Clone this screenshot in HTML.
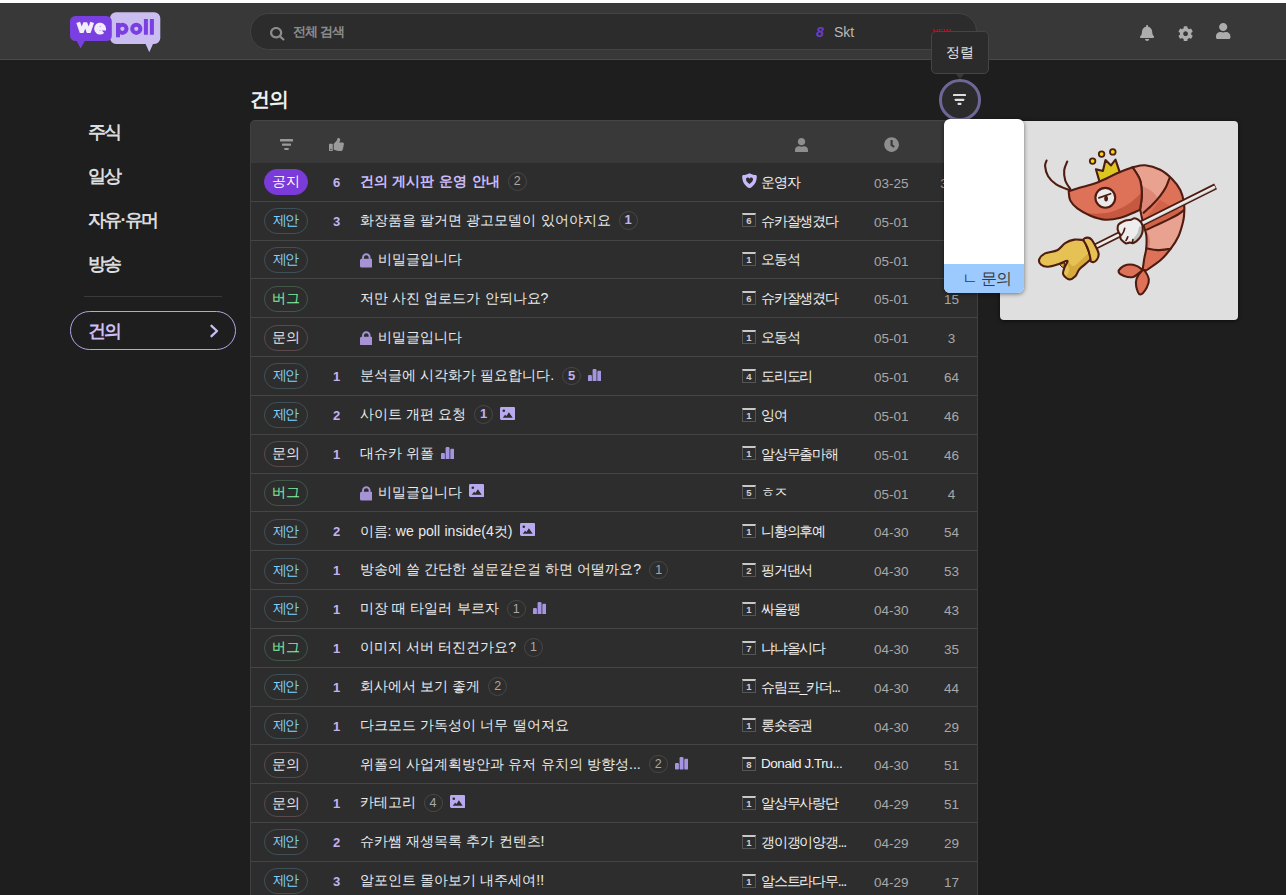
<!DOCTYPE html>
<html lang="ko">
<head>
<meta charset="utf-8">
<title>wepoll</title>
<style>
*{box-sizing:border-box;margin:0;padding:0}
html,body{width:1286px;height:895px;overflow:hidden;background:#1e1e1e;font-family:"Liberation Sans",sans-serif;color:#e0e0e0}
.abs{position:absolute}
#topstrip{position:absolute;left:0;top:0;width:1286px;height:3px;background:#fff}
#header{position:absolute;left:0;top:3px;width:1286px;height:57px;background:#383838;border-bottom:1px solid #4a4a4a}
#search{position:absolute;left:250px;top:13px;width:727px;height:37px;border-radius:19px;background:#2c2c2c;border:1px solid #434343}
#search .ph{position:absolute;left:42px;top:9.500px;font-size:12.500px;font-weight:bold;letter-spacing:-.9px;color:#8c8c8c;line-height:16px}
#search .rk{position:absolute;left:565px;top:9.300px;font-size:14px;line-height:18px;color:#6a3ec8;font-style:italic;font-weight:bold}
#search .kw{position:absolute;left:583px;top:8.800px;font-size:14px;line-height:18px;color:#b8b8b8}
#search .new{position:absolute;left:681px;top:14px;font-size:8px;line-height:8px;color:#c4001a;font-weight:bold}
/* sidebar */
.nav{position:absolute;left:88px;font-size:18px;letter-spacing:-1.700px;font-weight:bold;color:#dcdcdc;line-height:22px;white-space:nowrap}
#navdiv{position:absolute;left:84px;top:296px;width:138px;height:1px;background:#3a3a3a}
#navact{position:absolute;left:70px;top:311px;width:166px;height:39px;border:1.5px solid #b7a3e8;border-radius:20px}
#navact span{position:absolute;left:16.500px;top:8px;font-size:18px;letter-spacing:-1.700px;font-weight:bold;color:#cdbff5;line-height:22px}
/* title */
#title{position:absolute;left:250px;top:86px;font-size:20px;letter-spacing:-1.500px;font-weight:bold;color:#f0f0f0;line-height:26px}
/* table */
#tbl{position:absolute;left:250px;top:120px;width:728px;height:775px;background:#2d2d2d;border-radius:5px 5px 0 0;overflow:hidden;border-left:1px solid #404040;border-right:1px solid #404040}
#thead{position:absolute;left:-1px;top:0;width:728px;height:43px;background:#393939;border:1px solid #454545;border-bottom:none;border-radius:5px 5px 0 0}
.row{position:absolute;left:0;width:728px;height:38.83px;border-bottom:1px solid #454545}
.badge{position:absolute;left:12.800px;top:6.300px;width:44px;height:26px;border-radius:13px;border:1px solid #4a5560;font-size:13.500px;letter-spacing:-.5px;line-height:24px;text-align:center;white-space:nowrap}
.b-n{background:#7a3bd8;border-color:#7a3bd8;color:#fff}
.b-s{color:#7fd0ff;border-color:#3f5058;letter-spacing:-1.500px;text-indent:-1px}
.b-b{color:#7ff0a0;border-color:#3f5848}
.b-q{color:#f0e6e6;border-color:#5a4a4a}
.like{position:absolute;left:70.500px;width:30px;top:11px;text-align:center;font-size:13px;font-weight:bold;color:#c3b3f3;line-height:18px}
.ttl{position:absolute;left:108.500px;top:8.200px;font-size:14.100px;word-spacing:.45px;line-height:20px;color:#eaeaea;white-space:nowrap;display:flex;align-items:center}
.ttl.nt{font-weight:bold;color:#cbbbfb;letter-spacing:.1px}
.cc{display:inline-block;width:19px;height:18.500px;border-radius:9.500px;border:1.300px solid #474747;font-size:12.500px;line-height:16px;text-align:center;color:#a8a8a8;margin-left:8px;font-weight:normal;letter-spacing:0;position:relative;top:.5px}
.cc.h{color:#c0b2f6;font-weight:bold;font-size:13px}
.au{position:absolute;left:510px;top:9.800px;font-size:14px;letter-spacing:-1.200px;line-height:18px;color:#f0f0f0;white-space:nowrap}
.lv{position:absolute;left:491px;top:11.600px;width:14px;height:14px;border:1px solid #555;border-top:2px solid #c8c8c8;font-size:9.500px;line-height:11px;font-weight:bold;color:#d0d0d0;text-align:center}
.dt{position:absolute;left:610.300px;width:60px;top:12px;text-align:center;font-size:13.500px;line-height:18px;color:#a8a8a8}
.vw{position:absolute;left:680.400px;width:40px;top:12px;text-align:center;font-size:13.500px;line-height:18px;color:#a8a8a8}
.ic{display:inline-block;vertical-align:middle}
.ig{margin-left:7px;display:inline-flex;align-items:center}
/* sort button, tooltip, dropdown, card */
#sortbtn{position:absolute;left:939.200px;top:78.900px;width:41.700px;height:41.700px;border-radius:50%;border:3.200px solid #6c6796;background:#2b2b2b}
#tip{position:absolute;left:931px;top:31px;width:58px;height:43px;background:#2b2b2b;border:1px solid #454545;border-radius:5px;font-size:14px;line-height:40px;text-align:center;color:#e6e6e6}
#tiparrow{position:absolute;left:956.200px;top:73.500px;width:0;height:0;border-left:4px solid transparent;border-right:4px solid transparent;border-top:5px solid #383838}
#dd{position:absolute;left:944px;top:119px;width:80px;height:174px;background:#fff;border-radius:6px;overflow:hidden;box-shadow:0 1px 4px rgba(0,0,0,.5)}
#dd .sel{position:absolute;left:0;top:145px;width:80px;height:29px;background:#9ccaff;color:#3a3a3a;font-size:15.500px;letter-spacing:-.5px;line-height:30px;padding-left:17.500px;white-space:nowrap}
#card{position:absolute;left:1000px;top:121px;width:238px;height:199px;background:#dfdfdf;border-radius:4px;box-shadow:0 1px 4px rgba(0,0,0,.6)}
</style>
</head>
<body>
<div id="topstrip"></div>
<div id="header"></div>
<div id="search">
  <span class="ph">전체 검색</span>
  <span class="rk">8</span><span class="kw">Skt</span>
  <span class="new">NEW</span>
</div>

<div class="nav" style="top:121px">주식</div>
<div class="nav" style="top:164.500px">일상</div>
<div class="nav" style="top:209px">자유·유머</div>
<div class="nav" style="top:252.500px">방송</div>
<div id="navdiv"></div>
<div id="navact"><span>건의</span></div>

<div id="title">건의</div>

<div id="tbl">
  <div id="thead"></div>
  <!--ROWS-->
<div class="row" style="top:43.00px"><span class="badge b-n">공지</span><span class="like">6</span><span class="ttl nt"><span>건의 게시판 운영 안내</span><span class="cc">2</span></span><svg class="abs" style="left:490.500px;top:9.500px" width="15" height="15.500" viewBox="0 0 15 15.500"><path d="M7.500 0.200C9.500 1.300 11.800 1.900 13.600 2.100c.8.100 1.200.6 1.200 1.300C14.800 9 12 13 7.500 15.300 3 13 .2 9 .2 3.400c0-.7.400-1.200 1.200-1.300C3.200 1.900 5.500 1.300 7.500.2z" fill="#c6b8fb"/><path d="M7.500 11C5.300 9.300 4 8.100 4 6.600a1.800 1.800 0 0 1 3.500-.8 1.800 1.800 0 0 1 3.500.8c0 1.500-1.300 2.700-3.500 4.400z" fill="#2d2d2d"/></svg><span class="au">운영자</span><span class="dt">03-25</span><span class="vw">354</span></div>
<div class="row" style="top:81.83px"><span class="badge b-s">제안</span><span class="like">3</span><span class="ttl"><span>화장품을 팔거면 광고모델이 있어야지요</span><span class="cc h">1</span></span><span class="lv">6</span><span class="au">슈카잘생겼다</span><span class="dt">05-01</span><span class="vw">8</span></div>
<div class="row" style="top:120.66px"><span class="badge b-s">제안</span><span class="ttl"><svg class="ic lock" style="position:relative;top:1.500px" width="12.600" height="14.500" viewBox="0 0 12.600 14.500"><path d="M3 6.500V4.500a3.300 3.300 0 0 1 6.600 0V6.500" fill="none" stroke="#a593d6" stroke-width="1.900"/><rect x="0" y="5.700" width="12.600" height="8.800" rx="1.500" fill="#a593d6"/></svg><span style="margin-left:5.500px">비밀글입니다</span></span><span class="lv">1</span><span class="au">오동석</span><span class="dt">05-01</span><span class="vw">5</span></div>
<div class="row" style="top:159.49px"><span class="badge b-b">버그</span><span class="ttl"><span>저만 사진 업로드가 안되나요?</span></span><span class="lv">6</span><span class="au">슈카잘생겼다</span><span class="dt">05-01</span><span class="vw">15</span></div>
<div class="row" style="top:198.32px"><span class="badge b-q">문의</span><span class="ttl"><svg class="ic lock" style="position:relative;top:1.500px" width="12.600" height="14.500" viewBox="0 0 12.600 14.500"><path d="M3 6.500V4.500a3.300 3.300 0 0 1 6.600 0V6.500" fill="none" stroke="#a593d6" stroke-width="1.900"/><rect x="0" y="5.700" width="12.600" height="8.800" rx="1.500" fill="#a593d6"/></svg><span style="margin-left:5.500px">비밀글입니다</span></span><span class="lv">1</span><span class="au">오동석</span><span class="dt">05-01</span><span class="vw">3</span></div>
<div class="row" style="top:237.15px"><span class="badge b-s">제안</span><span class="like">1</span><span class="ttl"><span>분석글에 시각화가 필요합니다.</span><span class="cc h">5</span><span class="ig"><svg class="ic chart" style="position:relative;top:-.2px" width="13.300" height="12.600" viewBox="0 0 13.300 12.600"><rect x="0" y="6.100" width="3.900" height="6.500" rx="1" fill="#a595e0"/><rect x="4.600" y="0" width="3.900" height="12.600" rx="1.200" fill="#a595e0"/><rect x="9.300" y="1.700" width="4" height="10.900" rx="1.200" fill="#a595e0"/></svg></span></span><span class="lv">4</span><span class="au">도리도리</span><span class="dt">05-01</span><span class="vw">64</span></div>
<div class="row" style="top:275.98px"><span class="badge b-s">제안</span><span class="like">2</span><span class="ttl"><span>사이트 개편 요청</span><span class="cc h">1</span><span class="ig"><svg class="ic img" style="position:relative;top:-1px" width="15.200" height="13" viewBox="0 0 15.200 13"><rect x="0" y="0" width="15.200" height="13" rx="1.400" fill="#b9aaf0"/><circle cx="3.800" cy="3.700" r="1.300" fill="#2d2d2d"/><path d="M2.700 10.800l2.400-3 1.300 1.300 2.500-3.800 3.800 5.500z" fill="#2d2d2d"/></svg></span></span><span class="lv">1</span><span class="au">잉여</span><span class="dt">05-01</span><span class="vw">46</span></div>
<div class="row" style="top:314.81px"><span class="badge b-q">문의</span><span class="like">1</span><span class="ttl"><span>대슈카 위폴</span><span class="ig"><svg class="ic chart" style="position:relative;top:-.2px" width="13.300" height="12.600" viewBox="0 0 13.300 12.600"><rect x="0" y="6.100" width="3.900" height="6.500" rx="1" fill="#a595e0"/><rect x="4.600" y="0" width="3.900" height="12.600" rx="1.200" fill="#a595e0"/><rect x="9.300" y="1.700" width="4" height="10.900" rx="1.200" fill="#a595e0"/></svg></span></span><span class="lv">1</span><span class="au">알상무출마해</span><span class="dt">05-01</span><span class="vw">46</span></div>
<div class="row" style="top:353.64px"><span class="badge b-b">버그</span><span class="ttl"><svg class="ic lock" style="position:relative;top:1.500px" width="12.600" height="14.500" viewBox="0 0 12.600 14.500"><path d="M3 6.500V4.500a3.300 3.300 0 0 1 6.600 0V6.500" fill="none" stroke="#a593d6" stroke-width="1.900"/><rect x="0" y="5.700" width="12.600" height="8.800" rx="1.500" fill="#a593d6"/></svg><span style="margin-left:5.500px">비밀글입니다</span><span class="ig"><svg class="ic img" style="position:relative;top:-1px" width="15.200" height="13" viewBox="0 0 15.200 13"><rect x="0" y="0" width="15.200" height="13" rx="1.400" fill="#b9aaf0"/><circle cx="3.800" cy="3.700" r="1.300" fill="#2d2d2d"/><path d="M2.700 10.800l2.400-3 1.300 1.300 2.500-3.800 3.800 5.500z" fill="#2d2d2d"/></svg></span></span><span class="lv">5</span><span class="au">ㅎㅈ</span><span class="dt">05-01</span><span class="vw">4</span></div>
<div class="row" style="top:392.47px"><span class="badge b-s">제안</span><span class="like">2</span><span class="ttl"><span>이름: we poll inside(4컷)</span><span class="ig"><svg class="ic img" style="position:relative;top:-1px" width="15.200" height="13" viewBox="0 0 15.200 13"><rect x="0" y="0" width="15.200" height="13" rx="1.400" fill="#b9aaf0"/><circle cx="3.800" cy="3.700" r="1.300" fill="#2d2d2d"/><path d="M2.700 10.800l2.400-3 1.300 1.300 2.500-3.800 3.800 5.500z" fill="#2d2d2d"/></svg></span></span><span class="lv">1</span><span class="au">니황의후예</span><span class="dt">04-30</span><span class="vw">54</span></div>
<div class="row" style="top:431.30px"><span class="badge b-s">제안</span><span class="like">1</span><span class="ttl"><span>방송에 쓸 간단한 설문같은걸 하면 어떨까요?</span><span class="cc">1</span></span><span class="lv">2</span><span class="au">핑거댄서</span><span class="dt">04-30</span><span class="vw">53</span></div>
<div class="row" style="top:470.13px"><span class="badge b-s">제안</span><span class="like">1</span><span class="ttl"><span>미장 때 타일러 부르자</span><span class="cc">1</span><span class="ig"><svg class="ic chart" style="position:relative;top:-.2px" width="13.300" height="12.600" viewBox="0 0 13.300 12.600"><rect x="0" y="6.100" width="3.900" height="6.500" rx="1" fill="#a595e0"/><rect x="4.600" y="0" width="3.900" height="12.600" rx="1.200" fill="#a595e0"/><rect x="9.300" y="1.700" width="4" height="10.900" rx="1.200" fill="#a595e0"/></svg></span></span><span class="lv">1</span><span class="au">싸울팽</span><span class="dt">04-30</span><span class="vw">43</span></div>
<div class="row" style="top:508.96px"><span class="badge b-b">버그</span><span class="like">1</span><span class="ttl"><span>이미지 서버 터진건가요?</span><span class="cc">1</span></span><span class="lv">7</span><span class="au">냐냐올시다</span><span class="dt">04-30</span><span class="vw">35</span></div>
<div class="row" style="top:547.79px"><span class="badge b-s">제안</span><span class="like">1</span><span class="ttl"><span>회사에서 보기 좋게</span><span class="cc">2</span></span><span class="lv">1</span><span class="au">슈림프_카더...</span><span class="dt">04-30</span><span class="vw">44</span></div>
<div class="row" style="top:586.62px"><span class="badge b-s">제안</span><span class="like">1</span><span class="ttl"><span>다크모드 가독성이 너무 떨어져요</span></span><span class="lv">1</span><span class="au">롱숏증권</span><span class="dt">04-30</span><span class="vw">29</span></div>
<div class="row" style="top:625.45px"><span class="badge b-q">문의</span><span class="ttl"><span>위폴의 사업계획방안과 유저 유치의 방향성...</span><span class="cc">2</span><span class="ig"><svg class="ic chart" style="position:relative;top:-.2px" width="13.300" height="12.600" viewBox="0 0 13.300 12.600"><rect x="0" y="6.100" width="3.900" height="6.500" rx="1" fill="#a595e0"/><rect x="4.600" y="0" width="3.900" height="12.600" rx="1.200" fill="#a595e0"/><rect x="9.300" y="1.700" width="4" height="10.900" rx="1.200" fill="#a595e0"/></svg></span></span><span class="lv">8</span><span class="au" style="letter-spacing:-.45px;font-size:13.500px">Donald J.Tru...</span><span class="dt">04-30</span><span class="vw">51</span></div>
<div class="row" style="top:664.28px"><span class="badge b-q">문의</span><span class="like">1</span><span class="ttl"><span>카테고리</span><span class="cc">4</span><span class="ig"><svg class="ic img" style="position:relative;top:-1px" width="15.200" height="13" viewBox="0 0 15.200 13"><rect x="0" y="0" width="15.200" height="13" rx="1.400" fill="#b9aaf0"/><circle cx="3.800" cy="3.700" r="1.300" fill="#2d2d2d"/><path d="M2.700 10.800l2.400-3 1.300 1.300 2.500-3.800 3.800 5.500z" fill="#2d2d2d"/></svg></span></span><span class="lv">1</span><span class="au">알상무사랑단</span><span class="dt">04-29</span><span class="vw">51</span></div>
<div class="row" style="top:703.11px"><span class="badge b-s">제안</span><span class="like">2</span><span class="ttl"><span>슈카쌤 재생목록 추가 컨텐츠!</span></span><span class="lv">1</span><span class="au">갱이갱이양갱...</span><span class="dt">04-29</span><span class="vw">29</span></div>
<div class="row" style="top:741.94px"><span class="badge b-s">제안</span><span class="like">3</span><span class="ttl"><span>알포인트 몰아보기 내주세여!!</span></span><span class="lv">1</span><span class="au">알스트라다무...</span><span class="dt">04-29</span><span class="vw">17</span></div>
<!--/ROWS-->
</div>

<div id="card"></div>
<!--SHRIMP-->
<svg class="abs" style="left:1000px;top:121px" width="238" height="199" viewBox="1000 121 238 199">
<defs><clipPath id="cb"><path d="M1132.6 167.2C1134.7 166.9 1140.6 164.9 1145.2 165.3C1149.8 165.7 1155.7 167.5 1160.2 169.8C1164.7 172.1 1168.9 175.8 1172.3 179.2C1175.7 182.6 1178.5 186.3 1180.4 190.2C1182.3 194.0 1183.3 198.5 1183.9 202.3C1184.5 206.1 1184.4 209.7 1184.2 213.0C1184.0 216.3 1184.0 218.2 1183.0 222.1C1182.0 226.0 1180.6 231.7 1178.5 236.2C1176.4 240.7 1173.4 245.2 1170.4 249.2C1167.4 253.2 1164.4 256.8 1160.4 260.3C1156.4 263.8 1148.7 268.7 1146.3 270.4L1142.6 270.0C1142.9 268.1 1143.7 261.9 1144.3 258.3C1144.9 254.7 1146.0 252.0 1146.3 248.2C1146.6 244.3 1146.8 239.2 1146.3 235.2C1145.8 231.2 1144.3 228.4 1143.3 224.1C1142.3 219.8 1140.6 211.8 1140.1 209.4C1140.4 207.1 1141.8 200.2 1141.8 195.3C1141.8 190.4 1141.6 184.9 1140.1 180.2C1138.6 175.5 1133.8 169.4 1132.6 167.2Z"/></clipPath><clipPath id="ch"><path d="M1068.7 191.3C1070.6 190.7 1075.8 188.9 1080.3 187.6C1084.8 186.3 1091.0 184.9 1095.4 183.3C1099.9 181.7 1103.0 180.0 1107.0 178.2C1111.0 176.3 1115.2 174.0 1119.5 172.2C1123.8 170.4 1130.4 168.0 1132.6 167.2C1133.8 169.4 1138.6 175.5 1140.1 180.2C1141.6 184.9 1141.8 190.4 1141.8 195.3C1141.8 200.2 1140.4 207.1 1140.1 209.4C1139.3 209.8 1138.9 210.4 1135.6 211.8C1132.3 213.2 1125.5 216.4 1120.5 217.7C1115.5 219.0 1110.5 220.0 1105.5 219.7C1100.5 219.4 1095.1 217.6 1090.4 215.7C1085.7 213.8 1080.7 210.9 1077.3 208.4C1073.9 205.9 1071.6 203.2 1070.2 200.4C1068.8 197.6 1069.0 192.8 1068.7 191.3Z"/></clipPath><clipPath id="cw"><path d="M1117.6 228.8C1117.5 227.5 1117.7 225.8 1118.4 224.7C1119.1 223.6 1120.7 222.8 1122.0 222.1C1123.3 221.4 1124.9 220.7 1126.4 220.3C1127.9 219.9 1130.0 220.0 1131.2 219.7C1132.4 219.4 1132.7 218.6 1133.6 218.4C1134.5 218.2 1135.6 218.3 1136.5 218.7C1137.4 219.0 1138.4 219.8 1139.2 220.5C1140.0 221.2 1141.0 222.0 1141.6 223.2C1142.2 224.4 1142.7 226.2 1142.8 227.9C1142.9 229.6 1142.6 231.6 1142.1 233.2C1141.6 234.8 1140.9 236.3 1139.9 237.7C1138.9 239.0 1137.5 240.4 1136.3 241.3C1135.1 242.2 1133.8 242.9 1132.7 243.1C1131.6 243.3 1130.5 242.5 1129.4 242.6C1128.3 242.7 1127.1 243.6 1126.0 243.4C1124.9 243.2 1123.8 242.1 1122.9 241.3C1122.0 240.5 1121.0 239.7 1120.6 238.6C1120.1 237.5 1120.5 236.1 1120.2 235.0C1119.9 233.9 1119.1 233.3 1118.7 232.3C1118.3 231.3 1117.6 230.1 1117.6 228.8Z"/></clipPath><clipPath id="cy"><path d="M1083.3 240.1C1081.8 240.0 1077.3 239.1 1074.3 239.6C1071.3 240.1 1068.0 241.3 1065.2 243.1C1062.4 244.9 1060.6 248.5 1057.2 250.2C1053.8 251.9 1048.1 251.9 1045.1 253.4C1042.1 254.9 1040.0 257.3 1039.3 259.2C1038.6 261.1 1039.6 263.5 1041.1 264.8C1042.6 266.1 1045.1 266.9 1048.1 266.8C1051.1 266.7 1055.8 265.0 1059.0 264.0C1062.2 263.0 1066.5 260.3 1067.4 260.9C1068.3 261.4 1065.3 265.1 1064.6 267.3C1063.9 269.5 1062.4 272.3 1063.2 274.3C1064.0 276.3 1067.2 279.1 1069.2 279.4C1071.2 279.7 1073.6 278.0 1075.3 276.3C1077.0 274.6 1077.5 271.5 1079.3 269.3C1081.1 267.1 1084.4 264.9 1086.3 263.3C1088.2 261.7 1089.8 260.1 1090.5 259.5Z"/></clipPath></defs>
<path d="M1132.6 167.2C1134.7 166.9 1140.6 164.9 1145.2 165.3C1149.8 165.7 1155.7 167.5 1160.2 169.8C1164.7 172.1 1168.9 175.8 1172.3 179.2C1175.7 182.6 1178.5 186.3 1180.4 190.2C1182.3 194.0 1183.3 198.5 1183.9 202.3C1184.5 206.1 1184.4 209.7 1184.2 213.0C1184.0 216.3 1184.0 218.2 1183.0 222.1C1182.0 226.0 1180.6 231.7 1178.5 236.2C1176.4 240.7 1173.4 245.2 1170.4 249.2C1167.4 253.2 1164.4 256.8 1160.4 260.3C1156.4 263.8 1148.7 268.7 1146.3 270.4L1142.6 270.0C1142.9 268.1 1143.7 261.9 1144.3 258.3C1144.9 254.7 1146.0 252.0 1146.3 248.2C1146.6 244.3 1146.8 239.2 1146.3 235.2C1145.8 231.2 1144.3 228.4 1143.3 224.1C1142.3 219.8 1140.6 211.8 1140.1 209.4C1140.4 207.1 1141.8 200.2 1141.8 195.3C1141.8 190.4 1141.6 184.9 1140.1 180.2C1138.6 175.5 1133.8 169.4 1132.6 167.2Z" fill="#e9a190"/>
<g clip-path="url(#cb)"><path d="M1141 186C1150 188 1158 196 1158 200L1143 215L1139 210Z" fill="#dd8876"/><path d="M1169.6 177.9C1169.0 179.4 1167.6 184.0 1166.0 187.0C1164.4 190.0 1162.5 192.8 1160.2 195.8C1157.9 198.8 1154.8 202.2 1152.0 205.0C1149.2 207.8 1145.0 211.5 1143.6 212.8L1140 224L1147.0 229.6C1149.0 228.7 1155.1 225.8 1159.0 224.0C1162.9 222.2 1167.1 220.2 1170.3 218.6C1173.5 217.0 1175.7 215.9 1178.0 214.5C1180.3 213.1 1183.0 210.9 1184.0 210.2L1190 200L1180 175Z" fill="#dd7259"/><path d="M1160 200C1166 203 1175 210 1183 211L1170 219L1147 230L1143 222Z" fill="#c75840" opacity=".55"/><path d="M1147 232C1152 240 1150 248 1147.500 249L1145 249L1145 230Z" fill="#dd8876"/><path d="M1146.3 248.2C1148.2 248.5 1153.4 250.0 1157.5 250.1C1161.6 250.2 1168.6 248.9 1170.8 248.7L1175 260L1146 275L1138 270Z" fill="#dd7259"/></g>
<g fill="none" stroke="#4e1c10" stroke-width="2.1" stroke-linecap="round" stroke-linejoin="round"><path d="M1132.6 167.2C1134.7 166.9 1140.6 164.9 1145.2 165.3C1149.8 165.7 1155.7 167.5 1160.2 169.8C1164.7 172.1 1168.9 175.8 1172.3 179.2C1175.7 182.6 1178.5 186.3 1180.4 190.2C1182.3 194.0 1183.3 198.5 1183.9 202.3C1184.5 206.1 1184.4 209.7 1184.2 213.0C1184.0 216.3 1184.0 218.2 1183.0 222.1C1182.0 226.0 1180.6 231.7 1178.5 236.2C1176.4 240.7 1173.4 245.2 1170.4 249.2C1167.4 253.2 1164.4 256.8 1160.4 260.3C1156.4 263.8 1148.7 268.7 1146.3 270.4L1142.6 270.0C1142.9 268.1 1143.7 261.9 1144.3 258.3C1144.9 254.7 1146.0 252.0 1146.3 248.2C1146.6 244.3 1146.8 239.2 1146.3 235.2C1145.8 231.2 1144.3 228.4 1143.3 224.1C1142.3 219.8 1140.6 211.8 1140.1 209.4C1140.4 207.1 1141.8 200.2 1141.8 195.3C1141.8 190.4 1141.6 184.9 1140.1 180.2C1138.6 175.5 1133.8 169.4 1132.6 167.2Z"/><path d="M1169.6 177.9C1169.0 179.4 1167.6 184.0 1166.0 187.0C1164.4 190.0 1162.5 192.8 1160.2 195.8C1157.9 198.8 1154.8 202.2 1152.0 205.0C1149.2 207.8 1145.0 211.5 1143.6 212.8"/><path d="M1184.0 210.2C1183.0 210.9 1180.3 213.1 1178.0 214.5C1175.7 215.9 1173.5 217.0 1170.3 218.6C1167.1 220.2 1162.9 222.2 1159.0 224.0C1155.1 225.8 1149.0 228.7 1147.0 229.6"/><path d="M1146.3 248.2C1148.2 248.5 1153.4 250.0 1157.5 250.1C1161.6 250.2 1168.6 248.9 1170.8 248.7"/></g>
<g fill="#dd7259" stroke="#4e1c10" stroke-width="2.1" stroke-linejoin="round"><path d="M1142.3 269.6C1141.0 268.5 1136.2 265.4 1133.2 264.8C1130.2 264.2 1126.5 264.7 1124.1 265.8C1121.7 266.9 1118.6 269.7 1118.6 271.4C1118.6 273.1 1121.7 275.0 1124.1 275.9C1126.5 276.8 1130.4 277.6 1133.2 276.9C1136.0 276.2 1139.3 272.8 1140.8 271.6C1142.3 270.4 1143.6 270.7 1142.3 269.6Z"/><path d="M1142.3 270.4C1141.0 271.6 1137.7 275.7 1136.7 278.4C1135.7 281.1 1135.6 283.8 1136.2 286.5C1136.8 289.2 1138.4 294.3 1140.2 294.5C1142.0 294.7 1145.4 290.0 1146.8 287.5C1148.2 285.0 1149.1 282.1 1148.8 279.4C1148.5 276.6 1145.9 272.5 1144.8 271.0C1143.7 269.5 1143.6 269.2 1142.3 270.4Z"/></g>
<g fill="none" stroke="#4e1c10" stroke-width="2.1" stroke-linecap="round"><path d="M1046.6 160.6C1046.3 161.5 1044.8 163.6 1045.1 166.2C1045.3 168.8 1046.2 173.2 1048.1 176.2C1049.9 179.2 1052.7 182.0 1056.2 184.3C1059.7 186.6 1067.0 189.1 1069.2 190.0"/><path d="M1067.2 161.6C1066.7 163.0 1064.5 167.1 1064.2 170.2C1063.9 173.3 1064.2 177.0 1065.2 180.2C1066.2 183.4 1069.5 187.7 1070.4 189.2"/></g>
<path d="M1099.6 181.9L1095.9 169.2L1102.9 170.9L1105.5 160.1L1111.0 165.4L1115.5 159.6L1119.7 172.2Z" fill="#dcc620" stroke="#4e1c10" stroke-width="2.1" stroke-linejoin="round"/>
<path d="M1068.7 191.3C1070.6 190.7 1075.8 188.9 1080.3 187.6C1084.8 186.3 1091.0 184.9 1095.4 183.3C1099.9 181.7 1103.0 180.0 1107.0 178.2C1111.0 176.3 1115.2 174.0 1119.5 172.2C1123.8 170.4 1130.4 168.0 1132.6 167.2C1133.8 169.4 1138.6 175.5 1140.1 180.2C1141.6 184.9 1141.8 190.4 1141.8 195.3C1141.8 200.2 1140.4 207.1 1140.1 209.4C1139.3 209.8 1138.9 210.4 1135.6 211.8C1132.3 213.2 1125.5 216.4 1120.5 217.7C1115.5 219.0 1110.5 220.0 1105.5 219.7C1100.5 219.4 1095.1 217.6 1090.4 215.7C1085.7 213.8 1080.7 210.9 1077.3 208.4C1073.9 205.9 1071.6 203.2 1070.2 200.4C1068.8 197.6 1069.0 192.8 1068.7 191.3Z" fill="#dd7259"/><g clip-path="url(#ch)"><path d="M1086.0 213.0C1088.3 213.1 1095.1 214.0 1100.0 213.6C1104.9 213.2 1110.4 212.3 1115.5 210.4C1120.6 208.5 1126.3 205.3 1130.6 202.4C1134.8 199.5 1139.3 194.6 1141.0 193.0L1146 215L1110 226L1080 220Z" fill="#c75840"/></g><path d="M1068.7 191.3C1070.6 190.7 1075.8 188.9 1080.3 187.6C1084.8 186.3 1091.0 184.9 1095.4 183.3C1099.9 181.7 1103.0 180.0 1107.0 178.2C1111.0 176.3 1115.2 174.0 1119.5 172.2C1123.8 170.4 1130.4 168.0 1132.6 167.2C1133.8 169.4 1138.6 175.5 1140.1 180.2C1141.6 184.9 1141.8 190.4 1141.8 195.3C1141.8 200.2 1140.4 207.1 1140.1 209.4C1139.3 209.8 1138.9 210.4 1135.6 211.8C1132.3 213.2 1125.5 216.4 1120.5 217.7C1115.5 219.0 1110.5 220.0 1105.5 219.7C1100.5 219.4 1095.1 217.6 1090.4 215.7C1085.7 213.8 1080.7 210.9 1077.3 208.4C1073.9 205.9 1071.6 203.2 1070.2 200.4C1068.8 197.6 1069.0 192.8 1068.7 191.3Z" fill="none" stroke="#4e1c10" stroke-width="2.1" stroke-linejoin="round"/>
<circle cx="1092.6" cy="161.1" r="2.800" fill="#f2d90f" stroke="#4e1c10" stroke-width="1.800"/>
<circle cx="1101.6" cy="154.1" r="2.800" fill="#f2d90f" stroke="#4e1c10" stroke-width="1.800"/>
<circle cx="1112.8" cy="151.9" r="2.800" fill="#f2d90f" stroke="#4e1c10" stroke-width="1.800"/>
<circle cx="1105.300" cy="197.800" r="9.900" fill="#eaeaea" stroke="#4e1c10" stroke-width="2.1"/><path d="M1098.900 197.900L1110.600 193.700" stroke="#4e1c10" stroke-width="1.700" stroke-linecap="round"/><ellipse cx="1106.100" cy="198.600" rx="1.900" ry="2.900" fill="#4e1c10"/>
<path d="M1090 249.300L1215.600 186.400" stroke="#4e1c10" stroke-width="6.300" stroke-linecap="butt"/><path d="M1090 249.300L1215 186.700" stroke="#ececec" stroke-width="2.700" stroke-linecap="butt"/><path d="M1120 235.700L1214.600 188.300" stroke="#c9c9c9" stroke-width=".9"/>
<path d="M1117.6 228.8C1117.5 227.5 1117.7 225.8 1118.4 224.7C1119.1 223.6 1120.7 222.8 1122.0 222.1C1123.3 221.4 1124.9 220.7 1126.4 220.3C1127.9 219.9 1130.0 220.0 1131.2 219.7C1132.4 219.4 1132.7 218.6 1133.6 218.4C1134.5 218.2 1135.6 218.3 1136.5 218.7C1137.4 219.0 1138.4 219.8 1139.2 220.5C1140.0 221.2 1141.0 222.0 1141.6 223.2C1142.2 224.4 1142.7 226.2 1142.8 227.9C1142.9 229.6 1142.6 231.6 1142.1 233.2C1141.6 234.8 1140.9 236.3 1139.9 237.7C1138.9 239.0 1137.5 240.4 1136.3 241.3C1135.1 242.2 1133.8 242.9 1132.7 243.1C1131.6 243.3 1130.5 242.5 1129.4 242.6C1128.3 242.7 1127.1 243.6 1126.0 243.4C1124.9 243.2 1123.8 242.1 1122.9 241.3C1122.0 240.5 1121.0 239.7 1120.6 238.6C1120.1 237.5 1120.5 236.1 1120.2 235.0C1119.9 233.9 1119.1 233.3 1118.7 232.3C1118.3 231.3 1117.6 230.1 1117.6 228.8Z" fill="#ededed"/><g clip-path="url(#cw)"><path d="M1139.4 226.5C1140.3 225.7 1142.3 226.8 1142.8 227.9C1143.2 229.0 1142.6 231.6 1142.1 233.2C1141.6 234.8 1140.9 236.3 1139.9 237.7C1138.9 239.0 1137.5 240.4 1136.3 241.3C1135.1 242.2 1133.2 243.6 1132.7 243.1C1132.2 242.6 1132.8 240.3 1133.6 238.6C1134.4 236.9 1136.5 235.0 1137.5 233.0C1138.5 231.0 1138.5 227.3 1139.4 226.5Z" fill="#c2c2c2"/></g><path d="M1117.6 228.8C1117.5 227.5 1117.7 225.8 1118.4 224.7C1119.1 223.6 1120.7 222.8 1122.0 222.1C1123.3 221.4 1124.9 220.7 1126.4 220.3C1127.9 219.9 1130.0 220.0 1131.2 219.7C1132.4 219.4 1132.7 218.6 1133.6 218.4C1134.5 218.2 1135.6 218.3 1136.5 218.7C1137.4 219.0 1138.4 219.8 1139.2 220.5C1140.0 221.2 1141.0 222.0 1141.6 223.2C1142.2 224.4 1142.7 226.2 1142.8 227.9C1142.9 229.6 1142.6 231.6 1142.1 233.2C1141.6 234.8 1140.9 236.3 1139.9 237.7C1138.9 239.0 1137.5 240.4 1136.3 241.3C1135.1 242.2 1133.8 242.9 1132.7 243.1C1131.6 243.3 1130.5 242.5 1129.4 242.6C1128.3 242.7 1127.1 243.6 1126.0 243.4C1124.9 243.2 1123.8 242.1 1122.9 241.3C1122.0 240.5 1121.0 239.7 1120.6 238.6C1120.1 237.5 1120.5 236.1 1120.2 235.0C1119.9 233.9 1119.1 233.3 1118.7 232.3C1118.3 231.3 1117.6 230.1 1117.6 228.8Z" fill="none" stroke="#4e1c10" stroke-width="2.1" stroke-linejoin="round"/>
<path d="M1124.700 228.300C1124.200 231 1122.800 233.500 1121.600 235M1127.800 236.800C1127.300 238.400 1126.600 239.600 1126 240.400M1132.900 239.500C1132.800 240.600 1132.500 241.600 1132.300 242.200" fill="none" stroke="#4e1c10" stroke-width="1.700" stroke-linecap="round"/>
<path d="M1083.3 240.3C1083.1 238.0 1086.1 237.7 1087.5 237.6C1088.9 237.5 1090.2 238.1 1091.5 239.5C1092.8 240.9 1094.2 243.7 1095.4 246.0C1096.6 248.3 1098.3 251.2 1098.6 253.5C1098.9 255.8 1097.9 258.1 1097.0 259.5C1096.1 260.9 1094.6 262.0 1093.4 262.1C1092.2 262.2 1090.8 262.1 1090.0 260.3C1089.2 258.5 1089.6 254.8 1088.5 251.5C1087.4 248.2 1083.5 242.6 1083.3 240.3Z" fill="#e6c254" stroke="#4e1c10" stroke-width="2.1" stroke-linejoin="round"/>
<path d="M1059.5 264.5L1064.5 262.5L1064.0 268.0L1062.0 267.0Z" fill="#d3a63a" stroke="#4e1c10" stroke-width="1" stroke-linejoin="round"/>
<path d="M1083.3 240.1C1081.8 240.0 1077.3 239.1 1074.3 239.6C1071.3 240.1 1068.0 241.3 1065.2 243.1C1062.4 244.9 1060.6 248.5 1057.2 250.2C1053.8 251.9 1048.1 251.9 1045.1 253.4C1042.1 254.9 1040.0 257.3 1039.3 259.2C1038.6 261.1 1039.6 263.5 1041.1 264.8C1042.6 266.1 1045.1 266.9 1048.1 266.8C1051.1 266.7 1055.8 265.0 1059.0 264.0C1062.2 263.0 1066.5 260.3 1067.4 260.9C1068.3 261.4 1065.3 265.1 1064.6 267.3C1063.9 269.5 1062.4 272.3 1063.2 274.3C1064.0 276.3 1067.2 279.1 1069.2 279.4C1071.2 279.7 1073.6 278.0 1075.3 276.3C1077.0 274.6 1077.5 271.5 1079.3 269.3C1081.1 267.1 1084.4 264.9 1086.3 263.3C1088.2 261.7 1089.8 260.1 1090.5 259.5Z" fill="#e6c254"/><g clip-path="url(#cy)"><path d="M1067.4 261.5C1068.1 260.8 1071.1 265.9 1073.0 266.0C1074.9 266.1 1076.5 264.0 1079.0 262.0C1081.5 260.0 1086.1 254.4 1088.0 254.0C1089.9 253.6 1090.8 257.9 1090.5 259.5C1090.2 261.1 1088.2 261.7 1086.3 263.3C1084.4 264.9 1081.1 267.1 1079.3 269.3C1077.5 271.5 1077.0 274.6 1075.3 276.3C1073.6 278.0 1070.8 279.1 1069.2 279.4C1067.7 279.7 1066.0 279.6 1066.0 278.0C1066.0 276.4 1068.8 272.8 1069.0 270.0C1069.2 267.2 1066.7 262.2 1067.4 261.5Z" fill="#d6ab3e"/></g><path d="M1083.3 240.1C1081.8 240.0 1077.3 239.1 1074.3 239.6C1071.3 240.1 1068.0 241.3 1065.2 243.1C1062.4 244.9 1060.6 248.5 1057.2 250.2C1053.8 251.9 1048.1 251.9 1045.1 253.4C1042.1 254.9 1040.0 257.3 1039.3 259.2C1038.6 261.1 1039.6 263.5 1041.1 264.8C1042.6 266.1 1045.1 266.9 1048.1 266.8C1051.1 266.7 1055.8 265.0 1059.0 264.0C1062.2 263.0 1066.5 260.3 1067.4 260.9C1068.3 261.4 1065.3 265.1 1064.6 267.3C1063.9 269.5 1062.4 272.3 1063.2 274.3C1064.0 276.3 1067.2 279.1 1069.2 279.4C1071.2 279.7 1073.6 278.0 1075.3 276.3C1077.0 274.6 1077.5 271.5 1079.3 269.3C1081.1 267.1 1084.4 264.9 1086.3 263.3C1088.2 261.7 1089.8 260.1 1090.5 259.5" fill="none" stroke="#4e1c10" stroke-width="2.1" stroke-linejoin="round" stroke-linecap="round"/>
<path d="M1083.300 240.300C1087 245 1089.500 253 1090.500 259.500" fill="none" stroke="#4e1c10" stroke-width="2.1"/>
</svg>
<!--/SHRIMP-->
<div id="sortbtn"></div>
<div id="tip">정렬</div>
<div id="tiparrow"></div>
<div id="dd"><div class="sel">ㄴ 문의</div></div>
<!--ICONS-->
<svg class="abs" style="left:66px;top:8px" width="100" height="48" viewBox="66 8 100 48">
<path d="M116 12.200h38.300a6 6 0 0 1 6 6v19.800a6 6 0 0 1-6 6h-1.300l-3.700 8.300-3.700-8.300H116a6 6 0 0 1-6-6V18.200a6 6 0 0 1 6-6z" fill="#cabdf0"/>
<path d="M75.300 16h31.200a5.300 5.300 0 0 1 5.300 5.300v14.400a5.300 5.300 0 0 1-5.300 5.300H84.800l-4.300 7.500L76.700 41h-1.400a5.300 5.300 0 0 1-5.300-5.300V21.300a5.300 5.300 0 0 1 5.300-5.300z" fill="#7a3fe0"/>
<g fill="none" stroke="#f1edfb" stroke-width="4">
<path d="M78.200 22.300l3.500 10 3.500-9.300 3.500 9.300 3.500-10" stroke-linejoin="miter" stroke-miterlimit="2"/>
<path d="M96.800 28.600h7.400a4.100 4.100 0 1 0-1.300 3" stroke-width="3.700"/>
</g>
<g fill="none" stroke="#7a3fe0" stroke-width="4">
<circle cx="122.400" cy="28.800" r="4.100"/>
<path d="M118 22.900v14.400"/>
<circle cx="136.300" cy="28.800" r="4.100"/>
<path d="M145.900 19.100v15.600M151.900 19.100v15.600"/>
</g>
</svg>
<svg class="abs" style="left:1140.3px;top:25.3px" width="14.2" height="16" viewBox="0 0 448 512" preserveAspectRatio="none"><path d="M224 512c35.320 0 63.970-28.650 63.970-64H160.030c0 35.350 28.650 64 63.970 64zm215.390-149.710c-19.320-20.760-55.470-51.990-55.470-154.290 0-77.700-54.480-139.900-127.940-155.160V32c0-17.670-14.320-32-31.980-32s-31.980 14.330-31.980 32v20.840C118.560 68.100 64.080 130.300 64.080 208c0 102.300-36.150 133.530-55.470 154.290-6 6.450-8.660 14.160-8.610 21.710.11 16.400 12.980 32 32.100 32h383.800c19.120 0 32-15.600 32.100-32 .05-7.550-2.610-15.270-8.610-21.710z" fill="#acacac"/></svg>
<svg class="abs" style="left:1177.8px;top:25.6px" width="15.2" height="15.4" viewBox="0 0 512 512" preserveAspectRatio="none"><path d="M487.400 315.700l-42.600-24.600c4.300-23.200 4.300-47 0-70.200l42.600-24.600c4.900-2.800 7.100-8.600 5.500-14-11.100-35.600-30-67.800-54.700-94.600-3.800-4.100-10-5.100-14.800-2.300L380.800 110c-17.900-15.400-38.500-27.300-60.800-35.100V25.800c0-5.600-3.900-10.500-9.400-11.700-36.700-8.200-74.300-7.800-109.200 0-5.500 1.200-9.400 6.100-9.400 11.700V75c-22.200 7.900-42.800 19.800-60.800 35.100L88.700 85.500c-4.900-2.800-11-1.900-14.800 2.300-24.700 26.700-43.600 58.900-54.700 94.600-1.700 5.400.6 11.200 5.500 14L67.300 221c-4.300 23.200-4.300 47 0 70.200l-42.600 24.600c-4.900 2.800-7.100 8.600-5.500 14 11.100 35.600 30 67.800 54.700 94.600 3.800 4.100 10 5.100 14.800 2.300l42.600-24.600c17.900 15.400 38.500 27.300 60.800 35.100v49.200c0 5.600 3.900 10.500 9.400 11.700 36.700 8.200 74.300 7.800 109.200 0 5.500-1.200 9.400-6.100 9.400-11.700v-49.200c22.200-7.900 42.800-19.800 60.800-35.100l42.600 24.600c4.900 2.800 11 1.900 14.800-2.300 24.700-26.700 43.600-58.900 54.700-94.600 1.500-5.500-.7-11.300-5.600-14.100zM256 336c-44.100 0-80-35.900-80-80s35.900-80 80-80 80 35.900 80 80-35.900 80-80 80z" fill="#acacac"/></svg>
<svg class="abs" style="left:1216.3px;top:22.5px" width="14.4" height="16" viewBox="0 0 448 512" preserveAspectRatio="none"><path d="M224 256c70.700 0 128-57.300 128-128S294.700 0 224 0 96 57.300 96 128s57.300 128 128 128zm89.600 32h-16.700c-22.200 10.200-46.900 16-72.900 16s-50.600-5.800-72.900-16h-16.700C60.200 288 0 348.200 0 422.400V464c0 26.500 21.500 48 48 48h352c26.500 0 48-21.500 48-48v-41.600c0-74.200-60.200-134.400-134.400-134.400z" fill="#acacac"/></svg>
<svg class="abs" style="left:270px;top:27px" width="14.5" height="13.5" viewBox="0 0 100.0 100.0" preserveAspectRatio="none"><path d="M69.2 42.3C69.2 57.2 57.2 69.2 42.3 69.2C27.5 69.2 15.4 57.2 15.4 42.3C15.4 27.5 27.5 15.4 42.3 15.4C57.2 15.4 69.2 27.5 69.2 42.3ZM100 92.3C100 90.3 99.2 88.3 97.8 86.9L77.2 66.3C82 59.3 84.6 50.8 84.6 42.3C84.6 18.9 65.7 0 42.3 0C18.9 0 0 18.9 0 42.3C0 65.7 18.9 84.6 42.3 84.6C50.8 84.6 59.3 82 66.3 77.2L86.9 97.7C88.3 99.2 90.3 100 92.3 100C96.5 100 100 96.5 100 92.3Z" fill="#8c8c8c"/></svg>
<svg class="abs" style="left:279.7px;top:139px" width="13" height="11" viewBox="0 0 13 11"><rect x="0" y="0" width="13" height="2.400" rx=".5" fill="#9a9a9a"/><rect x="2" y="4.500" width="9" height="2.300" rx=".5" fill="#9a9a9a"/><rect x="4.300" y="8.900" width="4.400" height="2.100" rx=".5" fill="#9a9a9a"/></svg>
<svg class="abs" style="left:328.9px;top:138px" width="15" height="13" viewBox="0 0 512 512" preserveAspectRatio="none"><path d="M104 224H24c-13.255 0-24 10.745-24 24v240c0 13.255 10.745 24 24 24h80c13.255 0 24-10.745 24-24V248c0-13.255-10.745-24-24-24zM64 472c-13.255 0-24-10.745-24-24s10.745-24 24-24 24 10.745 24 24-10.745 24-24 24zM384 81.452c0 42.416-25.970 66.208-33.277 94.548h101.723c33.397 0 59.397 27.746 59.553 58.098.084 17.938-7.546 37.249-19.439 49.197l-.11.110c9.836 23.337 8.237 56.037-9.308 79.469 8.681 25.895-.069 57.704-16.382 74.757 4.298 17.598 2.244 32.575-6.148 44.632C440.202 511.587 389.616 512 346.839 512l-2.845-.001c-48.287-.017-87.806-17.598-119.560-31.725-15.957-7.099-36.821-15.887-52.651-16.178-6.540-.120-11.783-5.457-11.783-11.998v-213.770c0-3.200 1.282-6.271 3.558-8.521 39.614-39.144 56.648-80.587 89.117-113.111 14.804-14.832 20.188-37.236 25.393-58.902C282.515 39.293 291.817 0 312 0c24 0 72 8 72 81.452z" fill="#9a9a9a"/></svg>
<svg class="abs" style="left:795px;top:137.5px" width="13" height="14.6" viewBox="0 0 448 512" preserveAspectRatio="none"><path d="M224 256c70.700 0 128-57.300 128-128S294.700 0 224 0 96 57.300 96 128s57.300 128 128 128zm89.600 32h-16.700c-22.200 10.200-46.900 16-72.900 16s-50.600-5.800-72.900-16h-16.700C60.200 288 0 348.200 0 422.400V464c0 26.500 21.500 48 48 48h352c26.500 0 48-21.500 48-48v-41.600c0-74.200-60.200-134.400-134.400-134.400z" fill="#8e8e8e"/></svg>
<svg class="abs" style="left:884px;top:137.4px" width="15.2" height="15.2" viewBox="0 0 512 512" preserveAspectRatio="none"><path d="M256 8C119 8 8 119 8 256s111 248 248 248 248-111 248-248S393 8 256 8zm57.100 350.100L224.900 294c-3.100-2.300-4.900-5.900-4.900-9.700V116c0-6.600 5.400-12 12-12h48c6.600 0 12 5.400 12 12v137.700l63.500 46.200c5.400 3.900 6.500 11.400 2.600 16.800l-28.200 38.800c-3.900 5.300-11.400 6.500-16.800 2.600z" fill="#8e8e8e"/></svg>
<svg class="abs" style="left:209px;top:324px" width="11" height="14" viewBox="0 0 11 14"><path d="M2.500 1.800L8 7l-5.500 5.200" fill="none" stroke="#cbbdf5" stroke-width="2.300" stroke-linecap="round" stroke-linejoin="round"/></svg>
<svg class="abs" style="left:952.600px;top:94.100px" width="13" height="11" viewBox="0 0 13 11"><rect x="0" y="0" width="13" height="2.100" rx=".4" fill="#dedede"/><rect x="1.800" y="4.800" width="9.400" height="2.100" rx=".4" fill="#dedede"/><rect x="4.600" y="8.700" width="3.800" height="2.200" rx=".4" fill="#dedede"/></svg>
<!--/ICONS-->
</body>
</html>
